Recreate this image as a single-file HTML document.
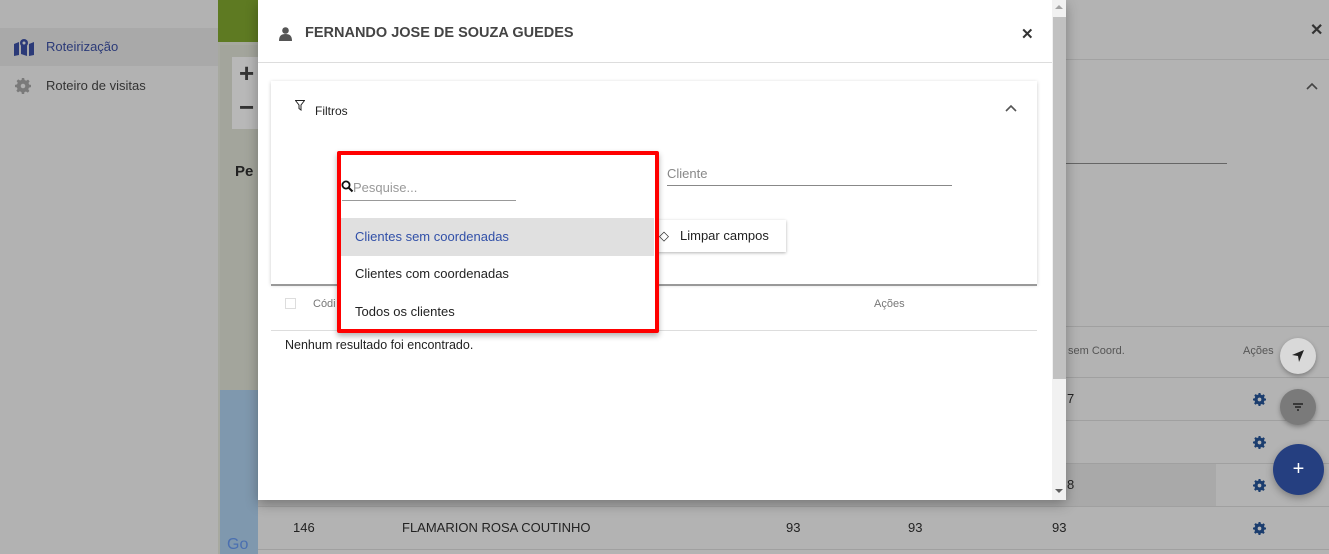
<!DOCTYPE html>
<html><head><meta charset="utf-8"><style>
*{box-sizing:border-box;margin:0;padding:0}
body{width:1329px;height:554px;overflow:hidden;background:#b3b3b3;font-family:"Liberation Sans",sans-serif;position:relative;color:#222}
.abs{position:absolute}
.side{left:0;top:0;width:218px;height:554px;background:#b2b2b2}
.nav{left:0;width:218px;height:38px;font-size:13px;color:#2b3a78;padding-left:46px;line-height:38px}
.map{left:218px;top:0;width:40px;height:554px;background:#a7a9a0}
.modal{left:258px;top:0;width:808px;height:500px;background:#fff;box-shadow:0 4px 12px rgba(0,0,0,.3)}
.row{left:258px;width:1071px;height:1px;background:#a0a0a0}
.t{font-size:13px;color:#222}
</style></head><body>
<svg width="0" height="0" style="position:absolute"><defs><g id="gear"><path d="M6 0h2l.4 1.8 1.4.6 1.6-1 1.4 1.4-1 1.6.6 1.4L14 6v2l-1.8.4-.6 1.4 1 1.6-1.4 1.4-1.6-1-1.4.6L8 14H6l-.4-1.8-1.4-.6-1.6 1-1.4-1.4 1-1.6-.6-1.4L0 8V6l1.8-.4.6-1.4-1-1.6 1.4-1.4 1.6 1 1.4-.6z"/></g></defs></svg>
<div class="abs side"></div>
<div class="abs" style="left:0;top:28px;width:218px;height:38px;background:#a9a9a9"></div>
<div class="abs nav" style="top:28px">Roteirização</div>
<div class="abs nav" style="top:67px;color:#333">Roteiro de visitas</div>
<svg class="abs" style="left:14px;top:38px" width="20" height="18" viewBox="0 0 20 18"><path d="M0 6l5-2v13l-5 1z M7 4l6 2v12l-6-2z M15 6l5-2v13l-5 1z" fill="#2b3a78"/><circle cx="10" cy="5" r="4" fill="#2b3a78"/><circle cx="10" cy="5" r="1.5" fill="#b0b0b0"/></svg>
<svg class="abs" style="left:15px;top:78px" width="16" height="16" viewBox="0 0 14 14"><use href="#gear" fill="#7a7a7a"/><circle cx="7" cy="7" r="2" fill="#b0b0b0"/></svg>
<div class="abs map"></div>
<div class="abs" style="left:218px;top:0;width:40px;height:42px;background:#5e7a22"></div>
<div class="abs" style="left:220px;top:45px;width:38px;height:500px;background:#a3a59c"></div>
<div class="abs" style="left:220px;top:390px;width:38px;height:164px;background:#7f98ae"></div>
<div class="abs" style="left:232px;top:57px;width:30px;height:72px;background:#b8b8b8"></div>
<div class="abs" style="left:239px;top:58px;font-size:26px;color:#333;font-weight:bold">+</div>
<div class="abs" style="left:239px;top:92px;font-size:26px;color:#333;font-weight:bold">−</div>
<div class="abs" style="left:235px;top:163px;font-size:15px;font-weight:bold;color:#222">Pe</div>
<div class="abs" style="left:227px;top:536px;font-size:16px;color:#4a6fb0">Go</div>
<div class="abs" style="left:1066px;top:59px;width:263px;height:1px;background:#a2a2a2"></div>
<div class="abs" style="left:1310px;top:20px;font-size:16px;font-weight:bold;color:#333">✕</div>
<svg class="abs" style="left:1306px;top:82px" width="12" height="8"><path d="M1 7l5-5 5 5" stroke="#444" stroke-width="1.6" fill="none"/></svg>
<div class="abs" style="left:1066px;top:163px;width:161px;height:1px;background:#666"></div>
<div class="abs row" style="top:326px"></div>
<div class="abs" style="left:1068px;top:345px;font-size:11px;color:#555">sem Coord.</div>
<div class="abs" style="left:1243px;top:345px;font-size:11px;color:#555">Ações</div>
<div class="abs row" style="top:377px"></div>
<div class="abs row" style="top:420px"></div>
<div class="abs" style="left:258px;top:463px;width:958px;height:43px;background:#a9a9a9"></div>
<div class="abs row" style="top:463px"></div>
<div class="abs row" style="top:506px"></div>
<div class="abs row" style="top:549px"></div>
<div class="abs t" style="left:1067px;top:391px">7</div>
<div class="abs t" style="left:1067px;top:477px">8</div>
<div class="abs t" style="left:293px;top:520px">146</div>
<div class="abs t" style="left:402px;top:520px">FLAMARION ROSA COUTINHO</div>
<div class="abs t" style="left:786px;top:520px">93</div>
<div class="abs t" style="left:908px;top:520px">93</div>
<div class="abs t" style="left:1052px;top:520px">93</div>
<svg class="abs" style="left:1253px;top:393px" width="13" height="13" viewBox="0 0 14 14"><use href="#gear" fill="#1b3d6e"/><circle cx="7" cy="7" r="2" fill="#b3b3b3"/></svg>
<svg class="abs" style="left:1253px;top:436px" width="13" height="13" viewBox="0 0 14 14"><use href="#gear" fill="#1b3d6e"/><circle cx="7" cy="7" r="2" fill="#b3b3b3"/></svg>
<svg class="abs" style="left:1253px;top:479px" width="13" height="13" viewBox="0 0 14 14"><use href="#gear" fill="#1b3d6e"/><circle cx="7" cy="7" r="2" fill="#b3b3b3"/></svg>
<svg class="abs" style="left:1253px;top:522px" width="13" height="13" viewBox="0 0 14 14"><use href="#gear" fill="#1b3d6e"/><circle cx="7" cy="7" r="2" fill="#b3b3b3"/></svg>
<div class="abs" style="left:1280px;top:338px;width:36px;height:36px;border-radius:50%;background:#d9d9d9;box-shadow:0 2px 5px rgba(0,0,0,.3)"></div>
<svg class="abs" style="left:1290px;top:348px" width="16" height="16"><path d="M14 2L2 7l6 1 1 6z" fill="#222"/></svg>
<div class="abs" style="left:1280px;top:389px;width:36px;height:36px;border-radius:50%;background:#7a7a7a;box-shadow:0 2px 5px rgba(0,0,0,.3)"></div>
<svg class="abs" style="left:1291px;top:400px" width="14" height="14"><path d="M2 4h10M4 7h6M6 10h2" stroke="#222" stroke-width="1.4"/></svg>
<div class="abs" style="left:1273px;top:444px;width:51px;height:51px;border-radius:50%;background:#253f80;box-shadow:0 3px 8px rgba(0,0,0,.3);color:#fff;font-size:20px;text-align:center;line-height:50px">+</div>
<div class="abs modal"></div>
<div class="abs" style="left:1052px;top:0;width:14px;height:500px;background:#f1f1f1"></div>
<div class="abs" style="left:1053px;top:17px;width:13px;height:362px;background:#c1c1c1"></div>
<div class="abs" style="left:1055px;top:5px;width:0;height:0;border:4px solid transparent;border-bottom-color:#a3a3a3;border-top:0"></div>
<div class="abs" style="left:1055px;top:489px;width:0;height:0;border:4px solid transparent;border-top-color:#606060;border-bottom:0"></div>
<svg class="abs" style="left:279px;top:27px" width="13" height="14" viewBox="0 0 13 14"><circle cx="6.5" cy="3.5" r="3.3" fill="#555"/><path d="M0 14c0-5 2-7 6.5-7s6.5 2 6.5 7z" fill="#555"/></svg>
<div class="abs" style="left:305px;top:25px;font-size:14.5px;font-weight:bold;color:#444">FERNANDO JOSE DE SOUZA GUEDES</div>
<div class="abs" style="left:1021px;top:25px;font-size:15px;font-weight:bold;color:#333">✕</div>
<div class="abs" style="left:258px;top:62px;width:794px;height:1px;background:#ddd"></div>
<div class="abs" style="left:271px;top:81px;width:766px;height:203px;background:#fff;box-shadow:0 1px 4px rgba(0,0,0,.2)"></div>
<svg class="abs" style="left:295px;top:100px" width="10" height="11"><path d="M0.5 0.5h9L6 5v5L4 8.5V5z" fill="none" stroke="#222" stroke-width="1"/></svg>
<div class="abs" style="left:315px;top:104px;font-size:12px;color:#222">Filtros</div>
<svg class="abs" style="left:1005px;top:104px" width="12" height="8"><path d="M1 7l5-5 5 5" stroke="#555" stroke-width="1.6" fill="none"/></svg>
<div class="abs" style="left:667px;top:166px;font-size:13px;color:#888">Cliente</div>
<div class="abs" style="left:667px;top:185px;width:285px;height:1px;background:#888"></div>
<div class="abs" style="left:650px;top:220px;width:136px;height:32px;background:#fff;box-shadow:0 1px 3px rgba(0,0,0,.3)"></div>
<div class="abs" style="left:659px;top:228px;font-size:13px;color:#333">◇</div>
<div class="abs" style="left:680px;top:228px;font-size:13px;color:#222">Limpar campos</div>
<div class="abs" style="left:271px;top:284px;width:766px;height:2px;background:#999"></div>
<div class="abs" style="left:285px;top:298px;width:11px;height:11px;border:1px solid #ddd"></div>
<div class="abs" style="left:313px;top:298px;font-size:11px;color:#777">Códi</div>
<div class="abs" style="left:874px;top:298px;font-size:11px;color:#777">Ações</div>
<div class="abs" style="left:271px;top:330px;width:766px;height:1px;background:#ddd"></div>
<div class="abs" style="left:285px;top:338px;font-size:12.5px;color:#222">Nenhum resultado foi encontrado.</div>
<div class="abs" style="left:337px;top:151px;width:322px;height:182px;background:#fff;border:4px solid #f00;border-radius:2px;box-shadow:0 3px 6px rgba(0,0,0,.3)"></div>
<svg class="abs" style="left:341px;top:180px" width="13" height="13"><circle cx="5" cy="5" r="3.6" fill="none" stroke="#111" stroke-width="1.8"/><path d="M7.5 7.5l4 4" stroke="#111" stroke-width="2"/></svg>
<div class="abs" style="left:353px;top:180px;font-size:13px;color:#999">Pesquise...</div>
<div class="abs" style="left:342px;top:200px;width:174px;height:1px;background:#999"></div>
<div class="abs" style="left:341px;top:218px;width:313px;height:38px;background:#e0e0e0"></div>
<div class="abs" style="left:355px;top:229px;font-size:13px;color:#3150a8">Clientes sem coordenadas</div>
<div class="abs" style="left:355px;top:266px;font-size:13px;color:#222">Clientes com coordenadas</div>
<div class="abs" style="left:355px;top:304px;font-size:13px;color:#222">Todos os clientes</div>
</body></html>
